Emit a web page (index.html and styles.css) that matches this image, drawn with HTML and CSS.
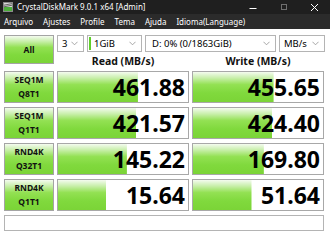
FILE: index.html
```html
<!DOCTYPE html>
<html lang="pt">
<head>
<meta charset="utf-8">
<title>CrystalDiskMark</title>
<link rel="stylesheet" href="styles.css">
</head>
<body>
<div class="window">
  <header class="titlebar">
    <svg class="app-icon" viewBox="0 0 10 10" aria-hidden="true">
      <rect x="0.5" y="0.5" width="9" height="9" fill="#d8d8d8" stroke="#8a8a8a" stroke-width="1"/>
      <rect x="1" y="5" width="8" height="4" fill="#4caf3a"/>
      <path d="M1 3.2 L9 1.6 M1 4.8 L9 3.2" stroke="#5a5a5a" stroke-width="0.9"/>
    </svg>
    <span class="title">CrystalDiskMark 9.0.1 x64 [Admin]</span>
    <div class="win-controls">
      <span class="wc"><svg width="8" height="8" viewBox="0 0 8 8"><path d="M0.5 5.5 H7.5" stroke="#ffffff" stroke-width="1"/></svg></span>
      <span class="wc"><svg width="8" height="8" viewBox="0 0 8 8"><rect x="1.5" y="1.5" width="5" height="5" fill="none" stroke="#6e6e6e" stroke-width="1"/></svg></span>
      <span class="wc"><svg width="9" height="9" viewBox="0 0 9 9"><path d="M1 1 L8 8 M8 1 L1 8" stroke="#ffffff" stroke-width="1"/></svg></span>
    </div>
  </header>
  <nav class="menubar">
    <span>Arquivo</span>
    <span>Ajustes</span>
    <span>Profile</span>
    <span>Tema</span>
    <span>Ajuda</span>
    <span>Idioma(Language)</span>
  </nav>
  <main class="bench">
    <div class="btn-all">All</div>
    <div class="selectors">
      <div class="select s-count"><span class="sel-text">3</span><svg class="chev" viewBox="0 0 8 5"><path d="M0.5 0.5 L4 4 L7.5 0.5" fill="none" stroke="#9a9a9a" stroke-width="1"/></svg></div>
      <div class="select s-size"><span class="accent"></span><span class="sel-text">1GiB</span><svg class="chev" viewBox="0 0 8 5"><path d="M0.5 0.5 L4 4 L7.5 0.5" fill="none" stroke="#9a9a9a" stroke-width="1"/></svg></div>
      <div class="select s-drive"><span class="sel-text">D: 0% (0/1863GiB)</span><svg class="chev" viewBox="0 0 8 5"><path d="M0.5 0.5 L4 4 L7.5 0.5" fill="none" stroke="#9a9a9a" stroke-width="1"/></svg></div>
      <div class="select s-unit"><span class="sel-text">MB/s</span><svg class="chev" viewBox="0 0 8 5"><path d="M0.5 0.5 L4 4 L7.5 0.5" fill="none" stroke="#9a9a9a" stroke-width="1"/></svg></div>
    </div>
    <div class="hdr">Read (MB/s)</div>
    <div class="hdr">Write (MB/s)</div>

    <div class="label"><span>SEQ1M</span><span>Q8T1</span></div>
    <div class="cell" style="--w:61.5%"><span class="val">461.88</span></div>
    <div class="cell" style="--w:62%"><span class="val">455.65</span></div>

    <div class="label"><span>SEQ1M</span><span>Q1T1</span></div>
    <div class="cell" style="--w:60%"><span class="val">421.57</span></div>
    <div class="cell" style="--w:61%"><span class="val">424.40</span></div>

    <div class="label"><span>RND4K</span><span>Q32T1</span></div>
    <div class="cell" style="--w:53%"><span class="val">145.22</span></div>
    <div class="cell" style="--w:54.5%"><span class="val">169.80</span></div>

    <div class="label"><span>RND4K</span><span>Q1T1</span></div>
    <div class="cell" style="--w:37%"><span class="val">15.64</span></div>
    <div class="cell" style="--w:45%"><span class="val">51.64</span></div>

    <div class="comment"></div>
  </main>
</div>
</body>
</html>
```
FILE: styles.css
```css
* {
  box-sizing: border-box;
  margin: 0;
  padding: 0;
}

html,
body {
  width: 330px;
  height: 237px;
  overflow: hidden;
  background: #ffffff;
}

body {
  font-family: "Noto Sans", "DejaVu Sans", sans-serif;
  color: #000000;
}

.window {
  width: 330px;
  height: 237px;
  background: #ffffff;
}

.titlebar {
  height: 14px;
  background: #1f1f1f;
  color: #ffffff;
  display: flex;
  align-items: center;
}

.app-icon {
  width: 10px;
  height: 10px;
  margin: 0 4px 0 3px;
  flex-shrink: 0;
}

.title {
  font-size: 8px;
  line-height: 14px;
  white-space: nowrap;
}

.win-controls {
  margin-left: auto;
  display: flex;
  height: 14px;
}

.wc {
  width: 31px;
  height: 14px;
  display: flex;
  align-items: center;
  justify-content: center;
}

.menubar {
  height: 15px;
  background: #2b2b2b;
  color: #ffffff;
  display: flex;
  align-items: center;
  gap: 10px;
  padding-left: 4px;
  font-size: 8px;
  white-space: nowrap;
}

.bench {
  display: grid;
  grid-template-columns: 50px 132px 132px;
  grid-template-rows: 17px 11px repeat(4, 32px) 16px;
  column-gap: 3px;
  row-gap: 4px;
  padding: 6px 0 0 4px;
}

.btn-all,
.label {
  border: 1px solid #a4a4a4;
  background: linear-gradient(180deg, #f4fbef 0%, #c8efaa 20%, #93e153 42%, #80d93d 70%, #7bd437 100%);
  color: #111111;
  font-weight: bold;
  font-size: 8.5px;
}

.btn-all {
  grid-column: 1;
  grid-row: 1 / 3;
  height: 29px;
  display: flex;
  align-items: center;
  justify-content: center;
}

.selectors {
  grid-column: 2 / 4;
  grid-row: 1;
  display: flex;
  gap: 3px;
}

.select {
  flex-shrink: 0;
  height: 17px;
  border: 1px solid #b4b4b4;
  background: #ffffff;
  display: flex;
  align-items: center;
  font-size: 9.5px;
  color: #000000;
  white-space: nowrap;
}

.sel-text {
  flex: 1;
  line-height: 15px;
}

.chev {
  width: 7px;
  height: 5px;
  margin-right: 5px;
  flex-shrink: 0;
}

.s-count {
  width: 27px;
  padding-left: 4px;
}

.s-size {
  width: 55px;
  padding-left: 1px;
}

.accent {
  width: 2px;
  height: 13px;
  background: #5fcf2a;
  margin-right: 3px;
}

.s-drive {
  width: 131px;
  padding-left: 6px;
}

.s-unit {
  width: 46px;
  padding-left: 4px;
}

.hdr {
  grid-row: 2;
  font-weight: bold;
  font-size: 10.5px;
  line-height: 11px;
  text-align: center;
  color: #111111;
  white-space: nowrap;
}

.label {
  display: flex;
  flex-direction: column;
  align-items: center;
  justify-content: center;
  line-height: 14px;
}

.cell {
  border: 1px solid #a8a8a8;
  background-color: #ffffff;
  background-image: linear-gradient(180deg, #f4fbef 0%, #c8efaa 20%, #93e153 42%, #80d93d 70%, #7bd437 100%);
  background-repeat: no-repeat;
  background-size: var(--w) 100%;
  display: flex;
  align-items: center;
  justify-content: flex-end;
  padding-right: 3px;
}

.val {
  font-weight: bold;
  font-size: 23px;
  line-height: 30px;
  color: #000000;
  white-space: nowrap;
}

.comment {
  grid-column: 1 / 4;
  border: 1px solid #b4b4b4;
  background: #ffffff;
}
```
